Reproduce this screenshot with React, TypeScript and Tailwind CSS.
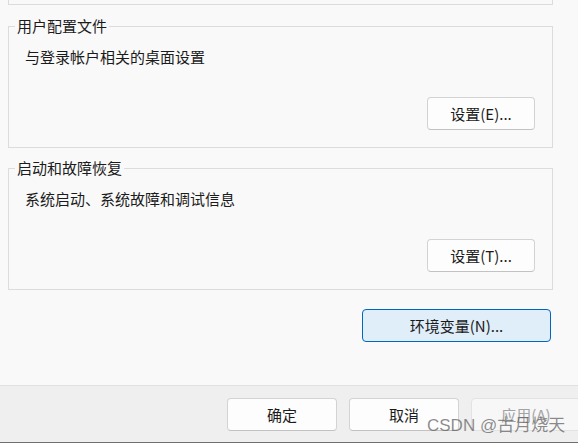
import type { ReactNode } from 'react';

/* ── Windows 11 style dialog fragment (系统属性 · 高级) ─────────── */

const font = 'font-["Noto_Sans_CJK_SC","Noto_Sans",sans-serif]';

function DlgButton({ children, className = '' }: { children: ReactNode; className?: string }) {
  return (
    <button
      type="button"
      className={`h-[33px] rounded-[4px] border border-[#d3d3d3] border-b-[#c2c2c2] bg-[#fdfdfd] text-[15px] leading-[20px] text-[#1b1b1b] ${className}`}
    >
      {children}
    </button>
  );
}

function Group({ title, desc, action }: { title: string; desc: string; action: string }) {
  return (
    <fieldset className="ml-[8px] w-[545px] border border-[#dcdcdc] pl-[16px] pr-[17px] pb-[17px]">
      <legend className="-ml-[10px] px-[2px] text-[15px] leading-[20px] text-[#1b1b1b]">{title}</legend>
      <p className="mt-[11px] text-[15px] leading-[20px] text-[#1b1b1b]">{desc}</p>
      <div className="mt-[30px] flex justify-end">
        <DlgButton className="w-[108px]">{action}</DlgButton>
      </div>
    </fieldset>
  );
}

export default function App() {
  return (
    <div className={`flex h-[443px] w-[578px] flex-col overflow-hidden bg-[#f9f9f9] ${font}`}>
      {/* tail of the group above */}
      <div className="ml-[8px] h-[5px] w-[545px] shrink-0 border-x border-b border-[#dcdcdc]" />

      <div className="mt-[11px]">
        <Group title="用户配置文件" desc="与登录帐户相关的桌面设置" action="设置(E)..." />
      </div>
      <div className="mt-[10px]">
        <Group title="启动和故障恢复" desc="系统启动、系统故障和调试信息" action="设置(T)..." />
      </div>

      <div className="ml-[8px] mt-[19px] flex w-[545px] justify-end pr-[2px]">
        <button
          type="button"
          className="h-[33px] w-[189px] rounded-[4px] border border-[#0067c0] bg-[#e0eef9] text-[15px] leading-[20px] text-[#1b1b1b]"
        >
          环境变量(N)...
        </button>
      </div>

      <div className="flex-1" />

      {/* footer */}
      <div className="relative h-[57px] shrink-0 border-t border-[#e0e0e0] bg-[#efefef]">
        <div className="flex gap-[12px] pl-[227px] pt-[12px]">
          <DlgButton className="w-[110px] shrink-0">确定</DlgButton>
          <DlgButton className="w-[110px] shrink-0">取消</DlgButton>
          <button
            type="button"
            className="h-[33px] w-[110px] shrink-0 rounded-[4px] border border-[#e3e3e3] bg-[#f7f7f7] text-[15px] leading-[20px] text-[#a3a3a3]"
          >
            应用(A)
          </button>
        </div>
        {/* blog watermark */}
        <span className='absolute left-[427px] top-[30px] whitespace-nowrap font-["Liberation_Sans","Noto_Sans_CJK_SC",sans-serif] text-[17px] leading-[20px] text-[rgba(95,95,95,0.72)]'>
          CSDN @古月烧天
        </span>
      </div>
      <div className="h-[1px] shrink-0 bg-[#6e6e6e]" />
    </div>
  );
}
